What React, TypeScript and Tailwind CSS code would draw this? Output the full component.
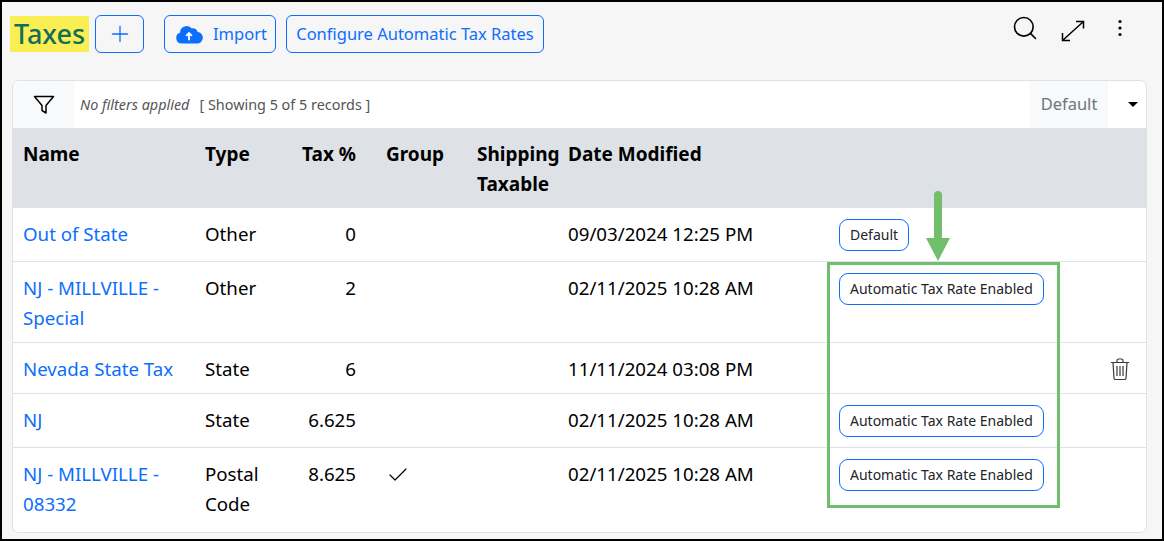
import { Search, Plus, Check } from "lucide-react";

function Badge({ children }: { children: React.ReactNode }) {
  return (
    <span className="inline-flex h-[32px] items-center rounded-[9px] border border-[#0d6efd] bg-white px-[10px] text-[14px] text-[#212529]">
      {children}
    </span>
  );
}
const rows = [
  { h: "h-[53px]", name: "Out of State", type: "Other", tax: "0", date: "09/03/2024 12:25 PM", badge: "Default" },
  { h: "h-[81px]", name: "NJ - MILLVILLE - Special", type: "Other", tax: "2", date: "02/11/2025 10:28 AM", badge: "Automatic Tax Rate Enabled" },
  { h: "h-[51px]", name: "Nevada State Tax", type: "State", tax: "6", date: "11/11/2024 03:08 PM", trash: true },
  { h: "h-[54px]", name: "NJ", type: "State", tax: "6.625", date: "02/11/2025 10:28 AM", badge: "Automatic Tax Rate Enabled" },
  { h: "h-[85px]", name: "NJ - MILLVILLE - 08332", type: "Postal Code", tax: "8.625", date: "02/11/2025 10:28 AM", badge: "Automatic Tax Rate Enabled", group: true },
];

export default function App() {
  return (
    <div className="relative flex h-[541px] w-[1164px] flex-col overflow-hidden border-2 border-black bg-[#f6f6f6] font-['Noto_Sans','Open_Sans',sans-serif] text-black">
      <div className="flex h-[78px] shrink-0 items-start pl-[8px] pr-[16px] pt-[13px]">
        <h1 className="mt-[1px] flex h-[36px] w-[79px] items-center justify-center bg-[#f9ef53] text-[27px] font-medium text-[#146c5a]">Taxes</h1>
        <button className="ml-[6px] flex h-[38px] w-[49px] items-center justify-center rounded-[6px] border border-[#0d6efd] text-[#0d6efd]">
          <Plus size={26} strokeWidth={1.2} />
        </button>
        <button className="ml-[20px] flex h-[38px] w-[112px] items-center gap-[10px] rounded-[6px] border border-[#0d6efd] pl-[10px] text-[16.5px] text-[#0d6efd]">
          <svg width="28" height="20" viewBox="0 0 28 21" fill="#0d6efd">
            <path d="M6.5 20.5A5.8 5.8 0 0 1 4.6 9.2 7 7 0 0 1 17 4.7a4.6 4.6 0 0 1 6 3.8A6 6 0 0 1 22 20.5Z" />
            <path d="M14 17v-6.5M11 12.5l3-3 3 3" fill="none" stroke="#fff" strokeWidth="2" />
          </svg>
          Import
        </button>
        <button className="ml-[10px] h-[38px] w-[258px] whitespace-nowrap rounded-[6px] border border-[#0d6efd] text-[16.5px] text-[#0d6efd]">
          Configure Automatic Tax Rates
        </button>
        <div className="ml-auto flex items-start pr-[23px]">
          <Search size={28} strokeWidth={1.4} className="-ml-[1px] mt-[-1px]" />
          <svg width="24" height="22" viewBox="0 0 24 22" fill="none" stroke="#000" strokeWidth="1.5" className="ml-[22px] mt-[5px]">
            <path d="M1.5 20.5 22.5 1.5M15 1.5h7.5v7M1.5 13v7.5H9" />
          </svg>
          <svg width="6" height="18" viewBox="0 0 6 18" fill="#000" className="ml-[32px] mt-[4px]">
            <circle cx="3" cy="2.5" r="1.6" /><circle cx="3" cy="9" r="1.6" /><circle cx="3" cy="15.5" r="1.6" />
          </svg>
        </div>
      </div>

      <div className="ml-[10px] w-[1135px] overflow-hidden rounded-[7px] border border-[#dee2e6] bg-white">
        <div className="flex h-[47px] items-stretch">
          <div className="flex w-[61px] items-center justify-center bg-[#f8f9fa]">
            <svg width="22" height="20" viewBox="0 0 22 20" fill="none" stroke="#000" strokeWidth="1.5">
              <path d="M1.5 1.5h19l-7.5 9v7.5l-4-2.5v-5Z" strokeLinejoin="round" />
            </svg>
          </div>
          <div className="flex items-center pl-[6px] text-[14.4px] text-[#555]">
            <i>No filters applied</i>
            <span className="ml-[10px]">[ Showing 5 of 5 records ]</span>
          </div>
          <div className="ml-auto flex w-[78px] items-center justify-center bg-[#f8f9fa] text-[16.5px] text-[#6c757d]">Default</div>
          <div className="flex w-[38px] items-center justify-center">
            <span className="ml-[12px] h-0 w-0 border-x-[5px] border-t-[5px] border-x-transparent border-t-black" />
          </div>
        </div>

        <table className="w-full table-fixed border-collapse text-[18.7px] leading-[30px]">
          <colgroup>
            <col className="w-[182px]" /><col className="w-[101px]" /><col className="w-[70px]" /><col className="w-[10px]" />
            <col className="w-[91px]" /><col className="w-[91px]" /><col className="w-[271px]" /><col />
          </colgroup>
          <thead>
            <tr className="h-[80px] bg-[#dee2e6] text-left align-top text-[19px] font-bold">
              <th className="pl-[10px] pt-[11px]">Name</th>
              <th className="pl-[10px] pt-[11px]">Type</th>
              <th className="pr-[10px] pt-[11px] text-right">Tax %</th>
              <th />
              <th className="pl-[10px] pt-[11px]">Group</th>
              <th className="pl-[10px] pt-[11px] whitespace-pre-line">{"Shipping\nTaxable"}</th>
              <th className="pl-[10px] pt-[11px] whitespace-nowrap">Date Modified</th>
              <th />
            </tr>
          </thead>
          <tbody>
            {rows.map((r, i) => (
              <tr key={r.name} className={`${r.h} align-top ${i < 4 ? "border-b border-[#dee2e6]" : ""}`}>
                <td className="pl-[10px] pr-[10px] pt-[11px]"><a className="text-[#0d6efd]">{r.name}</a></td>
                <td className="pl-[10px] pr-[10px] pt-[11px]">{r.type}</td>
                <td className="pr-[10px] pt-[11px] text-right">{r.tax}</td>
                <td />
                <td className="pl-[10px] pt-[15px]">{r.group && <Check size={24} strokeWidth={1.2} />}</td>
                <td />
                <td className="pl-[10px] pt-[11px] whitespace-nowrap">{r.date}</td>
                <td className="pl-[10px] pt-[10px]">
                  {r.badge && <Badge>{r.badge}</Badge>}
                  {r.trash && (
                    <svg width="20" height="22" viewBox="0 0 20 22" fill="none" stroke="#343a40" strokeWidth="1.2" className="ml-[271px] mt-[5px]">
                      <path d="M1 4.5h18M3 4.5l1 15.5a1.5 1.5 0 0 0 1.5 1.5h9a1.5 1.5 0 0 0 1.5-1.5l1-15.5M7 4.5V2.5a1.5 1.5 0 0 1 1.5-1.5h3a1.5 1.5 0 0 1 1.5 1.5v2M7 8v10M10 8v10M13 8v10" />
                    </svg>
                  )}
                </td>
              </tr>
            ))}
          </tbody>
        </table>
      </div>

      <div className="pointer-events-none absolute left-[825px] top-[260px] h-[246px] w-[233px] border-[3px] border-[#71bf6b]" />
      <svg className="pointer-events-none absolute left-[923px] top-[189px]" width="26" height="72" viewBox="0 0 26 72" fill="#71bf6b">
        <rect x="9" y="0" width="8" height="50" rx="4" />
        <path d="M1 47h24L13 70Z" />
      </svg>
    </div>
  );
}
